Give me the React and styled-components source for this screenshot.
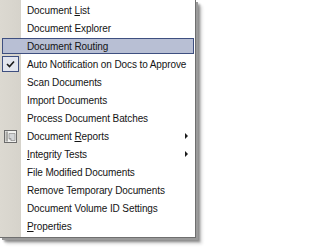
import React from 'react';
import styled, { createGlobalStyle } from 'styled-components';

const GlobalStyle = createGlobalStyle`
  html, body {
    margin: 0;
    padding: 0;
    background: #ffffff;
  }
  body {
    width: 206px;
    height: 249px;
    overflow: hidden;
  }
`;

const Page = styled.div`
  width: 206px;
  height: 249px;
  background: #ffffff;
`;

const Menu = styled.div`
  width: 195px;
  padding: 1px 0 2px 0;
  background: linear-gradient(to right, #dcd9d1 0, #d6d3cb 21px, #ffffff 21px);
  border-right: 1px solid #6f6f6f;
  border-bottom: 1px solid #6f6f6f;
  box-shadow: 2px 2px 0 #9a9a9a, 4px 4px 2px rgba(0, 0, 0, 0.35), 6px 6px 3px rgba(0, 0, 0, 0.15);
  font-family: "Liberation Sans", Arial, sans-serif;
  font-size: 10px;
  color: #141414;
`;

const Row = styled.div`
  height: 18px;
  padding: 1px 1px 1px 2px;
  box-sizing: border-box;
  display: flex;
`;

const Item = styled.div`
  flex: 1;
  display: flex;
  align-items: center;
  box-sizing: border-box;
  border: 1px solid ${(p) => (p.$active ? '#3e4f80' : 'transparent')};
  background: ${(p) => (p.$active ? '#b8bfd4' : 'transparent')};
`;

const IconSlot = styled.div`
  width: 17px;
  height: 16px;
  margin: -1px 0 -1px -1px;
  flex: 0 0 17px;
  display: flex;
  align-items: center;
  justify-content: center;
  box-sizing: border-box;
  border: 1px solid ${(p) => (p.$checked ? '#3e4f80' : 'transparent')};
  background: ${(p) => (p.$checked ? '#e2e5ee' : 'transparent')};
`;

const Label = styled.span`
  flex: 1;
  padding-left: 8px;
  white-space: nowrap;
  letter-spacing: -0.1px;
`;

const Key = styled.span`
  text-decoration: underline;
  text-underline-offset: 1px;
`;

const Arrow = styled.span`
  width: 0;
  height: 0;
  margin-right: 5px;
  border-top: 3.5px solid transparent;
  border-bottom: 3.5px solid transparent;
  border-left: 3.5px solid #1c1c1c;
`;

const Check = () => (
  <svg width="9" height="8" viewBox="0 0 9 8">
    <path d="M1 4 L3.5 6.5 L8 1.5" fill="none" stroke="#1a1a1a" strokeWidth="1.6" />
  </svg>
);

const ReportIcon = () => (
  <svg width="13" height="13" viewBox="0 0 13 13">
    <rect x="0.5" y="0.5" width="12" height="12" fill="#f2f2f0" stroke="#6c6c6c" />
    <rect x="1.5" y="1.5" width="2.5" height="10" fill="#a9a9a6" />
    <path d="M5 3.5h6v7h-4l-2-2z" fill="#d4d6d8" stroke="#8c8c8c" strokeWidth="0.7" />
    <path d="M5 8.5h2v2" fill="none" stroke="#8c8c8c" strokeWidth="0.7" />
  </svg>
);

const items = [
  { label: <>Document <Key>L</Key>ist</> },
  { label: 'Document Explorer' },
  { label: 'Document Routing', active: true },
  { label: 'Auto Notification on Docs to Approve', checked: true },
  { label: 'Scan Documents' },
  { label: 'Import Documents' },
  { label: 'Process Document Batches' },
  { label: <>Document <Key>R</Key>eports</>, icon: 'report', sub: true },
  { label: <><Key>I</Key>ntegrity Tests</>, sub: true },
  { label: 'File Modified Documents' },
  { label: 'Remove Temporary Documents' },
  { label: 'Document Volume ID Settings' },
  { label: <><Key>P</Key>roperties</> },
];

export default function App() {
  return (
    <Page>
      <GlobalStyle />
      <Menu>
        {items.map((it, i) => (
          <Row key={i}>
            <Item $active={it.active}>
              <IconSlot $checked={it.checked}>
                {it.checked && <Check />}
                {it.icon === 'report' && <ReportIcon />}
              </IconSlot>
              <Label>{it.label}</Label>
              {it.sub && <Arrow />}
            </Item>
          </Row>
        ))}
      </Menu>
    </Page>
  );
}
